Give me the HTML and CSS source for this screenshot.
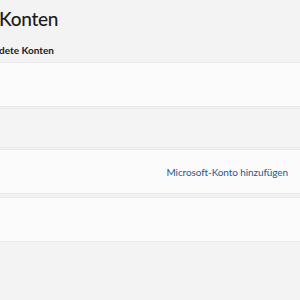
FILE: index.html
```html
<!DOCTYPE html>
<html lang="de">
<head>
    <meta charset="UTF-8">
    <title>Konten</title>
    <link rel="stylesheet" href="styles.css">
</head>
<body>
<div class="page">
    <h1 class="title">Konten</h1>
    <h2 class="subtitle">dete Konten</h2>
    <div class="list">
        <div class="card"></div>
        <div class="card card-flat"></div>
        <div class="card card-link">
            <a href="#" class="add">Microsoft-Konto hinzufügen</a>
        </div>
        <div class="card card-last"></div>
    </div>
</div>
</body>
</html>
```

FILE: styles.css
```css
*{margin: 0; padding: 0; box-sizing: border-box;}
body {
    background-color: #f3f3f3;
    font-family: Lato, "Noto Sans", sans-serif;
    color: #1b1b1b;
}
.page {
    width: 300px;
    height: 300px;
    overflow: hidden;
}
.title {
    font-size: 19px;
    font-weight: 500;
    line-height: 28px;
    margin-top: 5px;
    margin-left: -1px;
    letter-spacing: -0.3px;
}
.subtitle {
    font-size: 10px;
    font-weight: 700;
    line-height: 16px;
    margin-top: 9px;
    margin-left: -1px;
}
.list {
    margin: 4px -1px 0;
    display: flex;
    flex-direction: column;
    gap: 1px;
}
.card {
    height: 45px;
    background-color: #fbfbfb;
    border: 1px solid #e8e8e8;
}
.card-flat {
    height: 40px;
    background-color: #f4f4f4;
}
.card-link {
    display: flex;
    align-items: center;
    justify-content: flex-end;
    padding-right: 12px;
}
.card-last {
    margin-top: 2px;
}
.add {
    font-size: 10px;
    letter-spacing: -0.1px;
    color: #1f5a8f;
    text-decoration: none;
}
```
